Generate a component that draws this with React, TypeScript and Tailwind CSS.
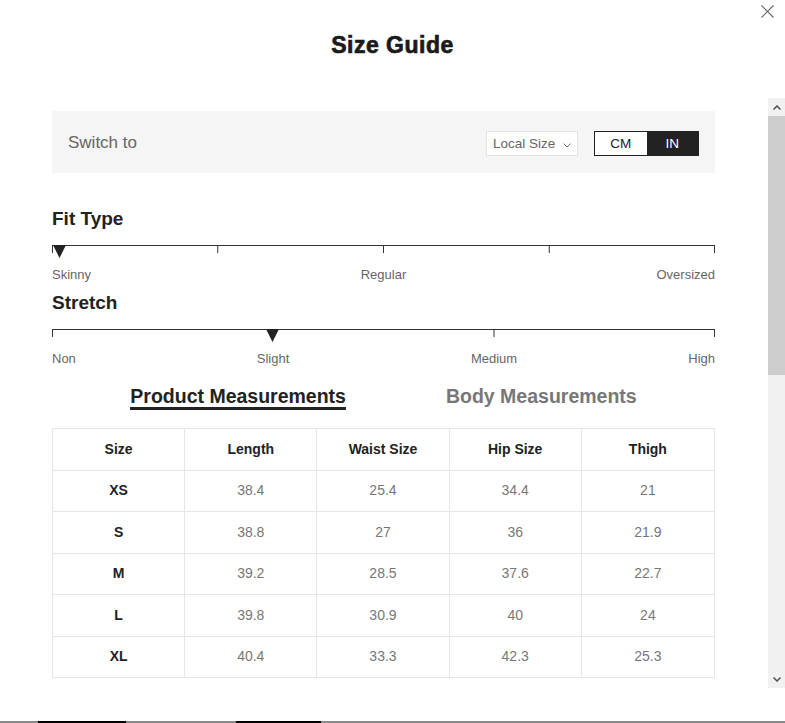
import React from "react";

const rows = [
  ["XS", "38.4", "25.4", "34.4", "21"],
  ["S", "38.8", "27", "36", "21.9"],
  ["M", "39.2", "28.5", "37.6", "22.7"],
  ["L", "39.8", "30.9", "40", "24"],
  ["XL", "40.4", "33.3", "42.3", "25.3"],
];

const headers = ["Size", "Length", "Waist Size", "Hip Size", "Thigh"];

function FitScale() {
  return (
    <svg width="663" height="14" viewBox="0 0 663 14" className="block">
      <line x1="0" y1="0.5" x2="663" y2="0.5" stroke="#333" strokeWidth="1" />
      {[0.5, 165.75, 331.5, 497.25, 662.5].map((x) => (
        <line key={x} x1={x} y1="0" x2={x} y2="8" stroke="#333" strokeWidth="1" />
      ))}
      <polygon points="1,0 14,0 7.5,13" fill="#222" />
    </svg>
  );
}

function StretchScale() {
  return (
    <svg width="663" height="14" viewBox="0 0 663 14" className="block">
      <line x1="0" y1="0.5" x2="663" y2="0.5" stroke="#333" strokeWidth="1" />
      {[0.5, 221, 442, 662.5].map((x) => (
        <line key={x} x1={x} y1="0" x2={x} y2="8" stroke="#333" strokeWidth="1" />
      ))}
      <polygon points="214,0 227,0 220.5,13" fill="#222" />
    </svg>
  );
}

export default function App() {
  return (
    <div className="relative w-[785px] h-[723px] overflow-hidden bg-white font-['Liberation_Sans',Arial,sans-serif] text-[#222]">
      {/* close */}
      <button className="absolute left-[760px] top-[4px] w-[15px] h-[15px] flex items-center justify-center">
        <svg width="13" height="13" viewBox="0 0 13 13">
          <line x1="0.5" y1="0.5" x2="12.5" y2="12.5" stroke="#666" strokeWidth="1.1" />
          <line x1="12.5" y1="0.5" x2="0.5" y2="12.5" stroke="#666" strokeWidth="1.1" />
        </svg>
      </button>

      {/* header */}
      <div className="h-[98px] pt-[31px] flex justify-center">
        <h1 className="text-[23px] leading-[28px] font-bold tracking-[0.5px] text-[#1a1a1a] [-webkit-text-stroke:0.7px_#1a1a1a]">
          Size Guide
        </h1>
      </div>

      {/* body */}
      <div className="flex h-[590px]">
        <div className="flex-1 overflow-hidden pl-[52px] pr-[53px] pt-[13px]">
          {/* switch box */}
          <div className="h-[62px] bg-[#f5f5f5] flex items-center pl-[16px] pr-[16px]">
            <span className="text-[17px] text-[#666] pt-[2px]">Switch to</span>
            <div className="ml-auto flex items-center gap-[16px] mt-[2px]">
              <div className="w-[92px] h-[25px] bg-white border border-[#e3e3e3] flex items-center pl-[6px] pr-[6px] text-[13.5px] text-[#666]">
                <span className="pt-[2px]">Local Size</span>
                <svg width="8" height="5" viewBox="0 0 8 5" className="ml-auto mt-[4px]">
                  <polyline points="0.5,0.5 4,4 7.5,0.5" fill="none" stroke="#777" strokeWidth="1" />
                </svg>
              </div>
              <div className="w-[105px] h-[25px] border border-[#222] flex text-[13.5px]">
                <div className="flex-1 flex items-center justify-center bg-white text-[#222] pt-[2px]">CM</div>
                <div className="flex-1 flex items-center justify-center bg-[#222] text-white pt-[2px]">IN</div>
              </div>
            </div>
          </div>

          {/* Fit type */}
          <h2 className="mt-[34px] text-[19px] leading-[24px] font-bold text-[#222]">Fit Type</h2>
          <div className="mt-[14px]">
            <FitScale />
          </div>
          <div className="relative mt-[8px] h-[16px] text-[13px] leading-[16px] text-[#666]">
            <span className="absolute left-0 top-0">Skinny</span>
            <span className="absolute left-[50%] top-0 -translate-x-1/2">Regular</span>
            <span className="absolute right-0 top-0">Oversized</span>
          </div>

          {/* Stretch */}
          <h2 className="mt-[8px] text-[19px] leading-[24px] font-bold text-[#222]">Stretch</h2>
          <div className="mt-[14px]">
            <StretchScale />
          </div>
          <div className="relative mt-[8px] h-[16px] text-[13px] leading-[16px] text-[#666]">
            <span className="absolute left-0 top-0">Non</span>
            <span className="absolute left-[33.333%] top-0 -translate-x-1/2">Slight</span>
            <span className="absolute left-[66.667%] top-0 -translate-x-1/2">Medium</span>
            <span className="absolute right-0 top-0">High</span>
          </div>

          {/* tabs */}
          <div className="mt-[18px] flex justify-center gap-[100px] text-[19.5px] leading-[22px] font-bold">
            <span className="text-[#222] border-b-[3px] border-[#222]">Product Measurements</span>
            <span className="text-[#777]">Body Measurements</span>
          </div>

          {/* table */}
          <div className="mt-[18px] border-t border-l border-r border-[#e6e6e6] text-[14px]">
            <div className="grid grid-cols-5 h-[41.5px] border-b border-[#e6e6e6]">
              {headers.map((h, i) => (
                <div
                  key={h}
                  className={
                    "flex items-center justify-center font-bold text-[#222] " +
                    (i < 4 ? "border-r border-[#e6e6e6]" : "")
                  }
                >
                  {h}
                </div>
              ))}
            </div>
            {rows.map((r) => (
              <div key={r[0]} className="grid grid-cols-5 h-[41.5px] border-b border-[#e6e6e6]">
                {r.map((c, i) => (
                  <div
                    key={i}
                    className={
                      "flex items-center justify-center " +
                      (i === 0 ? "font-bold text-[#222] " : "text-[#777] ") +
                      (i < 4 ? "border-r border-[#e6e6e6]" : "")
                    }
                  >
                    {c}
                  </div>
                ))}
              </div>
            ))}
          </div>
          <div className="h-[600px]" />
        </div>

        {/* scrollbar */}
        <div className="w-[17px] h-full bg-[#f1f1f1] flex flex-col">
          <div className="h-[18px] flex items-center justify-center">
            <svg width="8" height="5" viewBox="0 0 8 5">
              <polyline points="0.5,4.5 4,1 7.5,4.5" fill="none" stroke="#505050" strokeWidth="1.5" />
            </svg>
          </div>
          <div className="h-[259px] bg-[#cdcdcd]" />
          <div className="flex-1" />
          <div className="h-[17px] flex items-center justify-center">
            <svg width="8" height="5" viewBox="0 0 8 5">
              <polyline points="0.5,0.5 4,4 7.5,0.5" fill="none" stroke="#505050" strokeWidth="1.5" />
            </svg>
          </div>
        </div>
      </div>

      {/* bottom strip */}
      <div className="absolute left-0 bottom-0 w-full h-[2px] bg-[#8a8a8a] flex">
        <div className="ml-[38px] w-[88px] h-full bg-black" />
        <div className="ml-[110px] w-[85px] h-full bg-black" />
      </div>
    </div>
  );
}
